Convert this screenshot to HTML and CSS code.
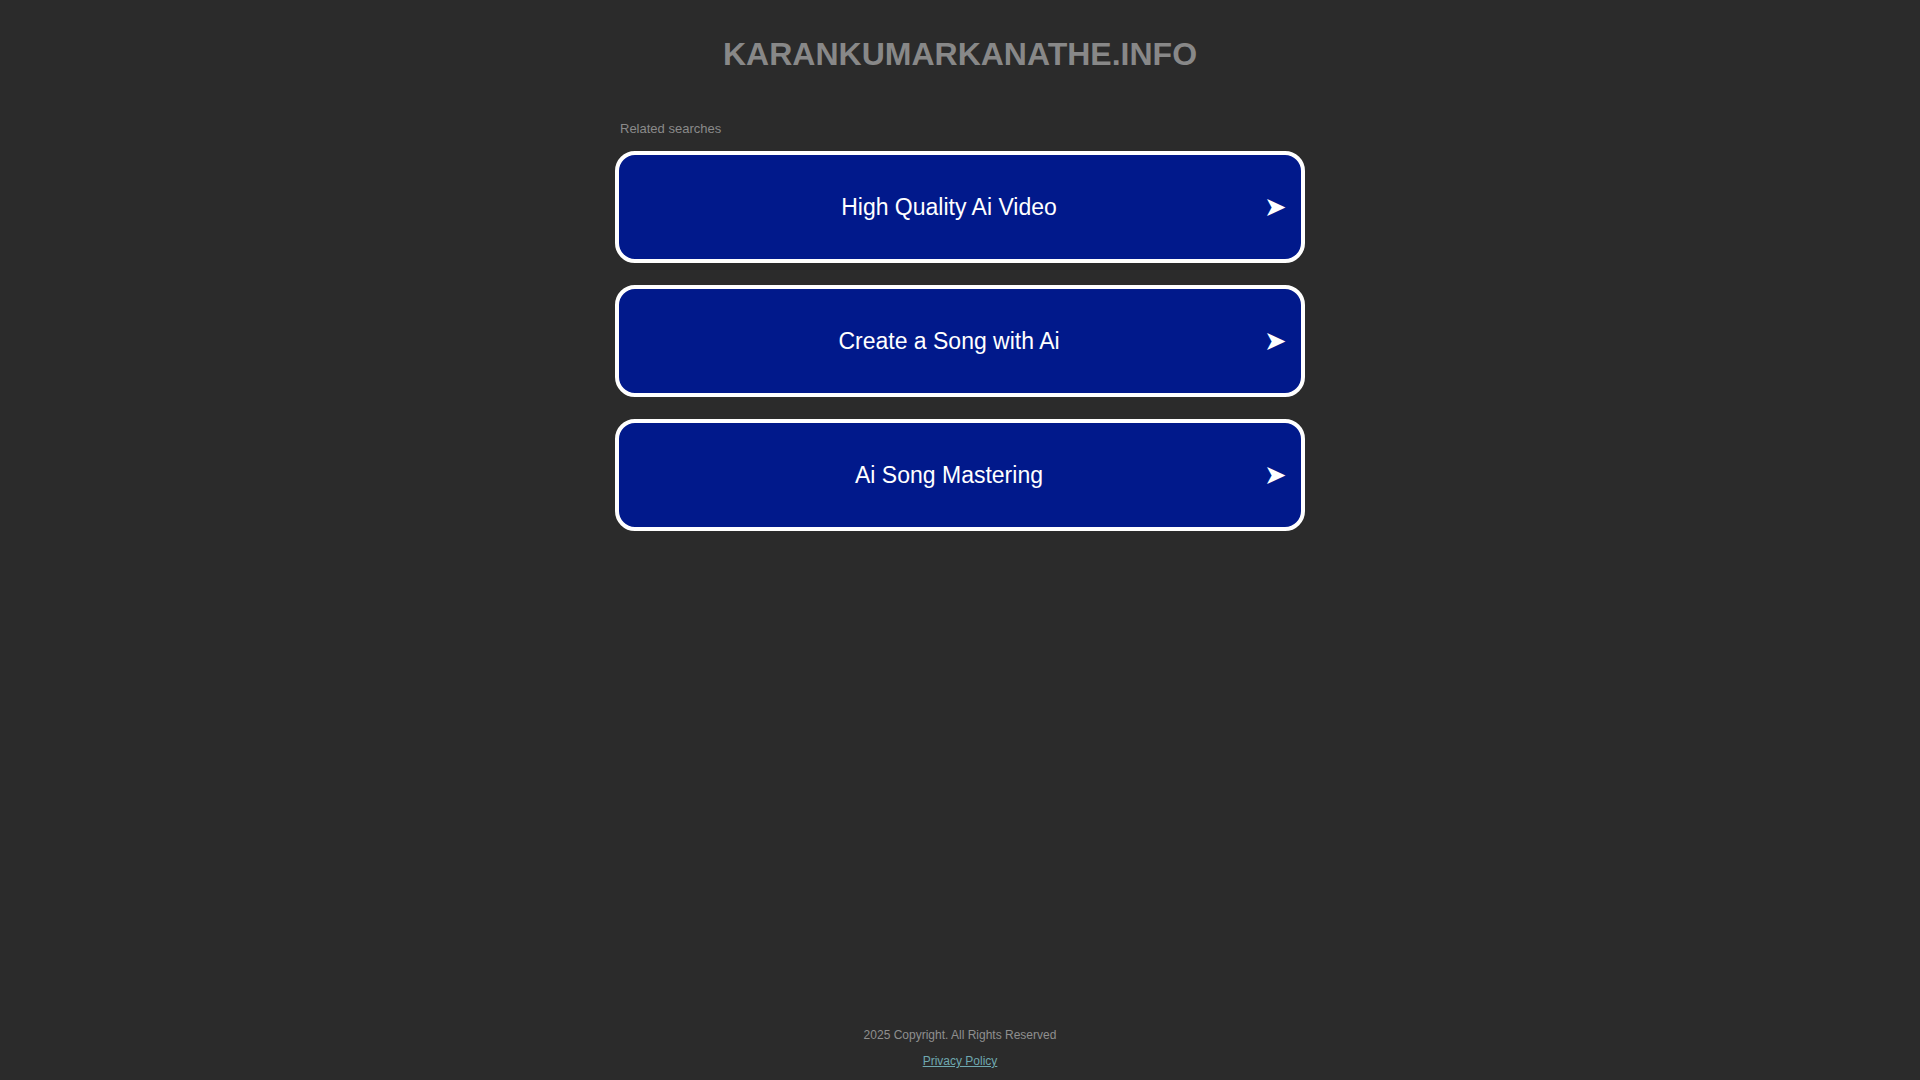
FILE: index.html
```html
<!DOCTYPE html>
<html lang="en">
<head>
<meta charset="utf-8">
<title>karankumarkanathe.info</title>
<link rel="stylesheet" href="styles.css">
</head>
<body>
<div class="page">
  <header class="header">
    <h1 class="domain">KARANKUMARKANATHE.INFO</h1>
  </header>
  <main class="content">
    <div class="related">Related searches</div>
    <ul class="links">
      <li><a class="card" href="#"><span class="card-text">High Quality Ai Video</span><span class="arrow">&#10148;</span></a></li>
      <li><a class="card" href="#"><span class="card-text">Create a Song with Ai</span><span class="arrow">&#10148;</span></a></li>
      <li><a class="card" href="#"><span class="card-text">Ai Song Mastering</span><span class="arrow">&#10148;</span></a></li>
    </ul>
  </main>
  <footer class="footer">
    <div class="copyright">2025 Copyright. All Rights Reserved</div>
    <a class="privacy" href="#">Privacy Policy</a>
  </footer>
</div>
</body>
</html>
```
FILE: styles.css
```css
html, body {
  margin: 0;
  padding: 0;
  background: #2b2b2b;
}
body {
  font-family: "Liberation Sans", Arial, sans-serif;
}
.page {
  min-height: 100vh;
  display: flex;
  flex-direction: column;
  align-items: center;
}
.header {
  padding-top: 36px;
}
.domain {
  margin: 0;
  font-size: 32px;
  line-height: 36px;
  font-weight: bold;
  color: #888888;
  text-align: center;
}
.content {
  width: 690px;
  margin-top: 49px;
}
.related {
  font-size: 13px;
  line-height: 15px;
  color: #8a8a8a;
  padding-left: 5px;
  margin-bottom: 15px;
}
.links {
  list-style: none;
  margin: 0;
  padding: 0;
  display: flex;
  flex-direction: column;
  gap: 22px;
}
.card {
  box-sizing: border-box;
  height: 112px;
  display: flex;
  align-items: center;
  padding: 0 15px 0 15px;
  background: #01198b;
  border: 4px solid #ffffff;
  border-radius: 20px;
  text-decoration: none;
  color: #ffffff;
}
.card-text {
  flex: 1;
  text-align: center;
  font-size: 23px;
  line-height: 28px;
}
.arrow {
  width: 22px;
  text-align: right;
  font-family: "DejaVu Sans", sans-serif;
  font-size: 27px;
  line-height: 28px;
  color: #ffffff;
}
.footer {
  margin-top: auto;
  padding-bottom: 12px;
  display: flex;
  flex-direction: column;
  align-items: center;
  gap: 12px;
}
.copyright {
  font-size: 12px;
  line-height: 14px;
  color: #8f8f8f;
}
.privacy {
  font-size: 12px;
  line-height: 14px;
  color: #6fa8b0;
  text-decoration: underline;
}
```
